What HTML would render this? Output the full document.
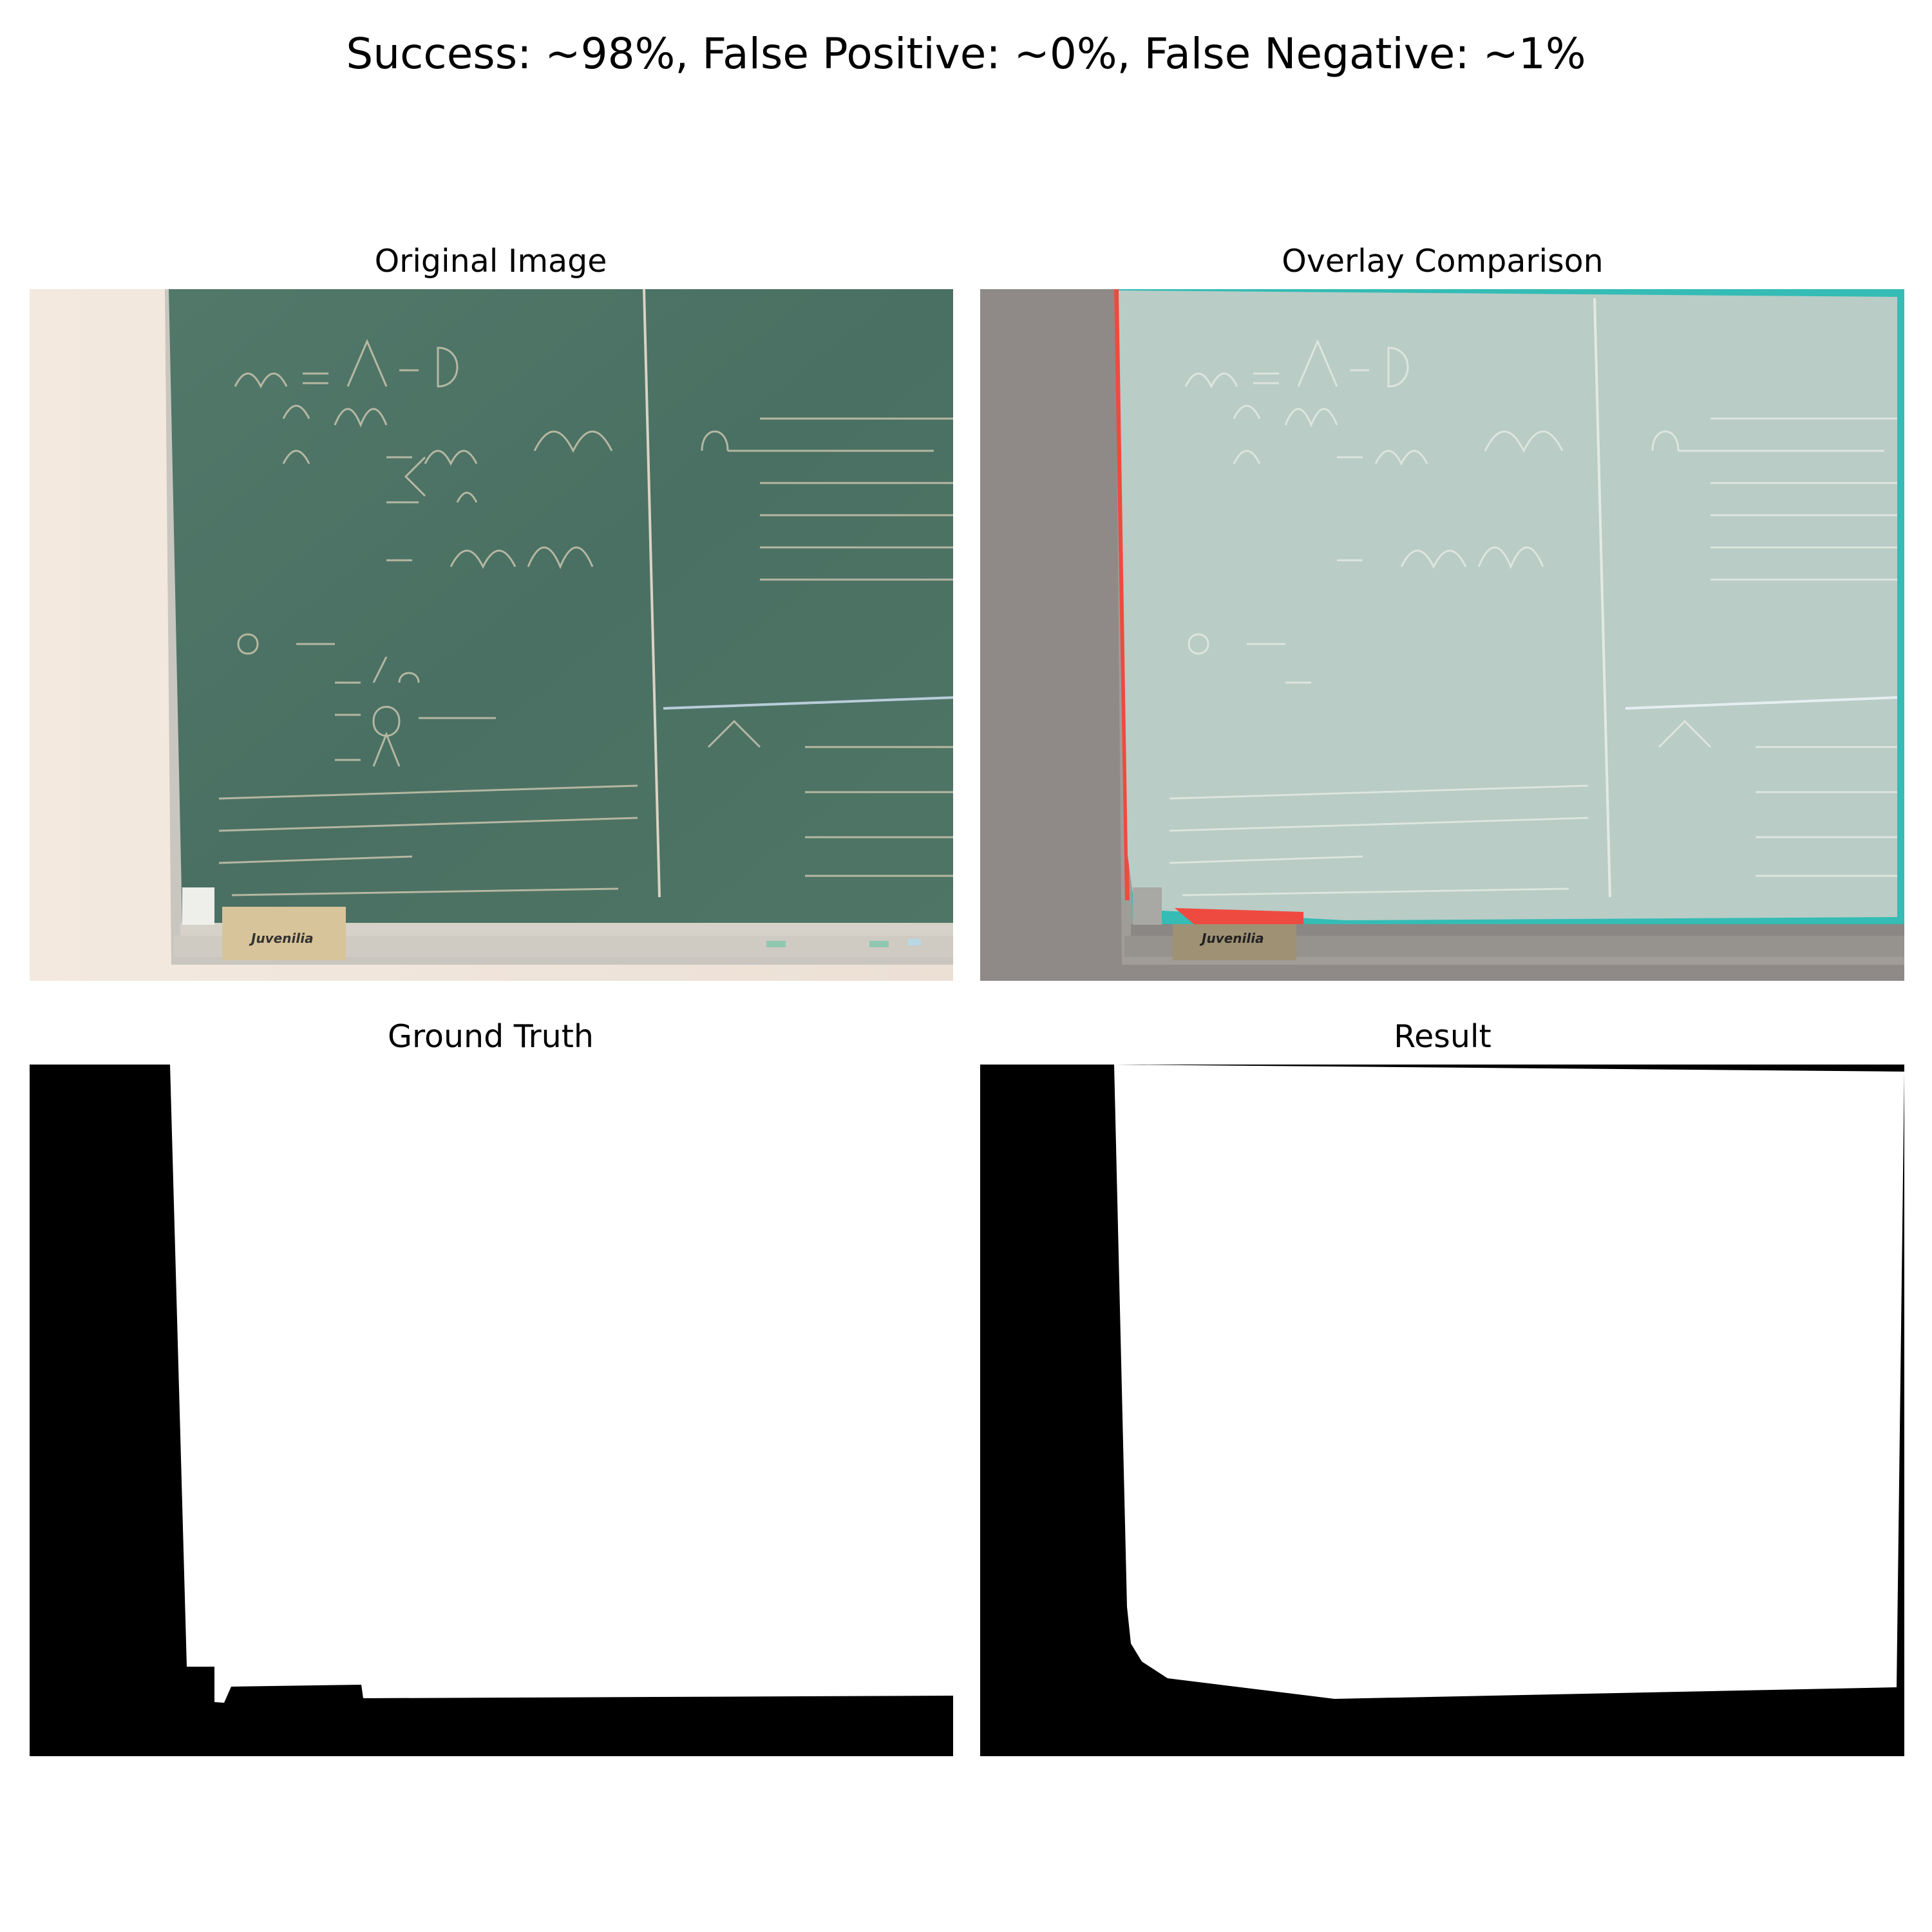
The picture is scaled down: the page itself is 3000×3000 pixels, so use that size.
<!DOCTYPE html>
<html><head><meta charset="utf-8"><style>
html,body{margin:0;padding:0;background:#fff;}
svg{display:block;}
text{font-family:"DejaVu Sans","Liberation Sans",sans-serif;}
</style></head><body>
<svg width="3000" height="3000" viewBox="0 0 3000 3000" xmlns="http://www.w3.org/2000/svg">
<defs>
<linearGradient id="board" x1="0" y1="0" x2="1" y2="1">
<stop offset="0" stop-color="#52786a"/><stop offset="0.5" stop-color="#4a7063"/><stop offset="1" stop-color="#4f7566"/>
</linearGradient>
<linearGradient id="wall" x1="0" y1="0" x2="1" y2="0">
<stop offset="0" stop-color="#f3e9df"/><stop offset="1" stop-color="#ece0d5"/>
</linearGradient>
<clipPath id="c1"><rect x="46" y="449" width="1434" height="1074"/></clipPath>
<clipPath id="c2"><rect x="1522" y="449" width="1435" height="1074"/></clipPath>
</defs>
<rect width="3000" height="3000" fill="#fff"/>
<text x="1500" y="106" font-size="66" text-anchor="middle" fill="#000">Success: ~98%, False Positive: ~0%, False Negative: ~1%</text>
<text x="762" y="422" font-size="49" text-anchor="middle" fill="#000">Original Image</text>
<text x="2240" y="422" font-size="49" text-anchor="middle" fill="#000">Overlay Comparison</text>
<text x="762" y="1626" font-size="49" text-anchor="middle" fill="#000">Ground Truth</text>
<text x="2240" y="1626" font-size="49" text-anchor="middle" fill="#000">Result</text>

<!-- Original -->
<g clip-path="url(#c1)">
<rect x="46" y="449" width="1436" height="1075" fill="url(#wall)"/>
<polygon points="256,449 1482,449 1482,1498 266,1498" fill="#c9c6c0"/>
<polygon points="262,449 1482,449 1482,1435 283,1435" fill="url(#board)"/>
<path d="M1000,449 L1024,1393" stroke="#d9d3c4" stroke-width="4" fill="none"/>
<path d="M1030,1100 L1482,1083" stroke="#b8cdd8" stroke-width="4"/>
<g stroke="#d8cfb6" stroke-width="3" fill="none" opacity="0.75">
<path d="M365,600 q20,-40 40,0 q20,-40 40,0 M470,580 l40,0 M470,595 l40,0 M540,600 l30,-70 l30,70 M620,575 l30,0 M680,540 c40,0 40,60 0,60 z"/>
<path d="M440,650 q20,-40 40,0 M520,660 q20,-50 40,0 q20,-50 40,0"/>
<path d="M440,720 q20,-40 40,0 M600,710 l40,0 M660,720 q20,-40 40,0 q20,-40 40,0 M830,700 q30,-60 60,0 q30,-60 60,0"/>
<path d="M600,780 l50,0 M660,770 l-30,-30 l30,-30 M710,780 q15,-30 30,0"/>
<path d="M600,870 l40,0 M700,880 q25,-50 50,0 q25,-50 50,0 M820,880 q25,-60 50,0 q25,-60 50,0"/>
<path d="M370,1000 c0,-20 30,-20 30,0 c0,20 -30,20 -30,0 M460,1000 l60,0 M520,1060 l40,0 M580,1060 l20,-40 M620,1060 c0,-20 30,-20 30,0"/>
<path d="M520,1110 l40,0 M580,1120 c0,-30 40,-30 40,0 c0,30 -40,30 -40,0 M650,1115 l120,0"/>
<path d="M520,1180 l40,0 M580,1190 l20,-50 l20,50"/>
<path d="M340,1240 l650,-20 M340,1290 l650,-20 M340,1340 l300,-10 M360,1390 l600,-10"/>
<path d="M1090,700 c0,-40 40,-40 40,0 M1130,700 l320,0 M1180,650 l300,0 M1180,750 l300,0 M1180,800 l300,0 M1180,850 l300,0 M1180,900 l300,0"/>
<path d="M1100,1160 l40,-40 l40,40 M1250,1160 l230,0 M1250,1230 l230,0 M1250,1300 l230,0 M1250,1360 l230,0"/>
</g>
<rect x="280" y="1433" width="1202" height="20" fill="#d6d2ca"/>
<rect x="270" y="1453" width="1212" height="33" fill="#cfcac2"/>
<rect x="283" y="1378" width="50" height="58" fill="#eeeeea"/>
<rect x="345" y="1408" width="192" height="83" fill="#d8c49a"/>
<text x="390" y="1464" font-size="20" font-weight="bold" font-style="italic" fill="#333">Juvenilia</text>
<rect x="1190" y="1461" width="30" height="10" fill="#8fc7b0"/>
<rect x="1350" y="1461" width="30" height="10" fill="#8fc7b0"/>
<rect x="1410" y="1458" width="20" height="10" fill="#b8d8e6"/>
</g>

<!-- Overlay -->
<g clip-path="url(#c2)">
<g transform="translate(-6,0)">
<rect x="1528" y="449" width="1436" height="1075" fill="#8f8a87"/>
<polygon points="1738,449 2964,449 2964,1498 1748,1498" fill="#a09d99"/>
<polygon points="1738,449 2964,449 2964,1435 1765,1435" fill="#34bcb5"/>
<polygon points="1736,449 1743,449 1760,1398 1753,1398" fill="#ef4a3f"/>
<polygon points="1743,451 2952,461 2952,1424 2095,1429 1790,1413 1765,1388 1757,1328" fill="#b9ccc6"/>
<polygon points="1830,1410 2030,1416 2030,1435 1860,1435" fill="#ef4a3f"/>
<path d="M2482,463 L2506,1393" stroke="#e4e9e3" stroke-width="4" fill="none"/>
<path d="M2530,1100 L2952,1083" stroke="#e6eef2" stroke-width="4"/>
<g stroke="#e6ebe4" stroke-width="3" fill="none" opacity="0.8">
<path d="M1847,600 q20,-40 40,0 q20,-40 40,0 M1952,580 l40,0 M1952,595 l40,0 M2022,600 l30,-70 l30,70 M2102,575 l30,0 M2162,540 c40,0 40,60 0,60 z"/>
<path d="M1922,650 q20,-40 40,0 M2002,660 q20,-50 40,0 q20,-50 40,0"/>
<path d="M1922,720 q20,-40 40,0 M2082,710 l40,0 M2142,720 q20,-40 40,0 q20,-40 40,0 M2312,700 q30,-60 60,0 q30,-60 60,0"/>
<path d="M2082,870 l40,0 M2182,880 q25,-50 50,0 q25,-50 50,0 M2302,880 q25,-60 50,0 q25,-60 50,0"/>
<path d="M1852,1000 c0,-20 30,-20 30,0 c0,20 -30,20 -30,0 M1942,1000 l60,0 M2002,1060 l40,0"/>
<path d="M1822,1240 l650,-20 M1822,1290 l650,-20 M1822,1340 l300,-10 M1842,1390 l600,-10"/>
<path d="M2572,700 c0,-40 40,-40 40,0 M2612,700 l320,0 M2662,650 l290,0 M2662,750 l290,0 M2662,800 l290,0 M2662,850 l290,0 M2662,900 l290,0"/>
<path d="M2582,1160 l40,-40 l40,40 M2732,1160 l220,0 M2732,1230 l220,0 M2732,1300 l220,0 M2732,1360 l220,0"/>
</g>
<rect x="1762" y="1435" width="1202" height="18" fill="#8a8784"/>
<rect x="1752" y="1453" width="1212" height="33" fill="#96928e"/>
<rect x="1765" y="1378" width="45" height="58" fill="#a8a8a4"/>
<rect x="1827" y="1435" width="192" height="56" fill="#9f9174"/>
<text x="1872" y="1464" font-size="20" font-weight="bold" font-style="italic" fill="#222">Juvenilia</text>
</g>
</g>

<!-- Ground truth -->
<rect x="46" y="1653" width="1434" height="1074" fill="#000"/>
<polygon points="264,1653 1480,1653 1480,2633 564,2637 561,2616 359,2619 348,2644 333,2643 333,2588 290,2588" fill="#fff"/>

<!-- Result -->
<rect x="1522" y="1653" width="1435" height="1074" fill="#000"/>
<polygon points="1730,1653 2957,1664 2945,2620 2072,2638 1813,2606 1773,2580 1756,2552 1750,2495" fill="#fff"/>
</svg>
</body></html>
